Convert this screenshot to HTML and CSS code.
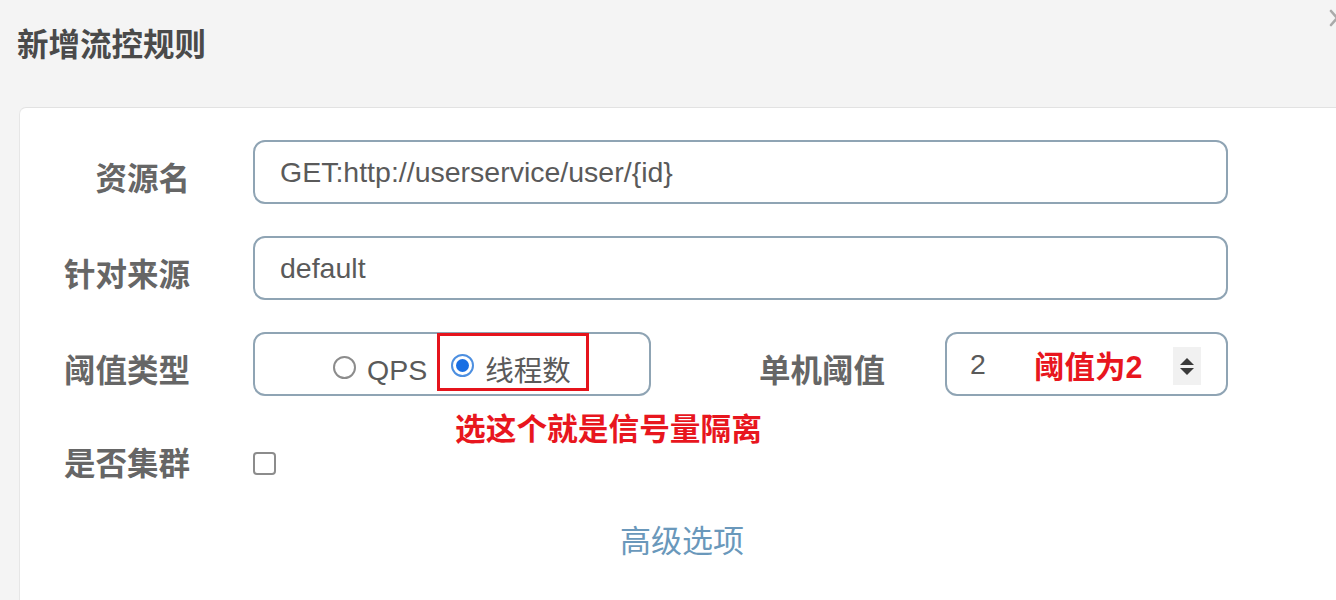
FILE: index.html
```html
<!DOCTYPE html>
<html lang="zh-CN">
<head>
<meta charset="utf-8">
<title>新增流控规则</title>
<link rel="stylesheet" href="styles.css">
</head>
<body>
<div class="modal">
  <div class="modal-header">
    <h3 class="modal-title">新增流控规则</h3>
    <svg class="close" width="16" height="18" viewBox="0 0 16 18" aria-label="close">
      <path d="M2 2 L14 16 M14 2 L2 16" stroke="#aaaaaa" stroke-width="2.6" stroke-linecap="round" fill="none"/>
    </svg>
  </div>
  <div class="card">
    <div class="form-row">
      <label class="label">资源名</label>
      <div class="input wide">GET:http://userservice/user/{id}</div>
    </div>
    <div class="form-row">
      <label class="label">针对来源</label>
      <div class="input wide">default</div>
    </div>
    <div class="form-row rel">
      <label class="label">阈值类型</label>
      <div class="input radio-box">
        <span class="radio"></span>
        <span class="radio-text">QPS</span>
        <span class="mark-box">
          <span class="radio checked"></span>
          <span class="radio-text">线程数</span>
        </span>
      </div>
      <label class="label label2">单机阈值</label>
      <div class="input number">
        <span class="num">2</span>
        <span class="num-note">阈值为2</span>
        <span class="spinner">
          <span class="tri up"></span>
          <span class="tri down"></span>
        </span>
      </div>
      <span class="note">选这个就是信号量隔离</span>
    </div>
    <div class="form-row check-row">
      <label class="label">是否集群</label>
      <span class="checkbox"></span>
    </div>
    <div class="advanced">高级选项</div>
  </div>
</div>
</body>
</html>
```

FILE: styles.css
```css
html, body {
  margin: 0;
  padding: 0;
  height: 100%;
  overflow: hidden;
}
body {
  background: #f4f4f4;
  font-family: "Liberation Sans", "Noto Sans CJK SC", sans-serif;
}
.modal {
  position: relative;
  height: 600px;
}
.modal-header {
  height: 107px;
  box-sizing: border-box;
  padding: 19px 0 0 17px;
}
.modal-title {
  margin: 0;
  font-family: "Noto Sans CJK SC", sans-serif;
  font-size: 31.5px;
  line-height: 46px;
  font-weight: 700;
  color: #4a4a4a;
}
.close {
  position: absolute;
  right: -9px;
  top: 9px;
}
.card {
  margin-left: 19px;
  margin-right: -20px;
  height: 520px;
  background: #ffffff;
  border-top: 1px solid #e2e2e2;
  border-left: 1px solid #e6e6e6;
  border-top-left-radius: 7px;
  padding-top: 32px;
  box-sizing: border-box;
}
.form-row {
  display: flex;
  align-items: center;
  height: 64px;
  margin-bottom: 32px;
}
.form-row.rel {
  position: relative;
  margin-top: 1px;
}
.label {
  width: 170px;
  flex: none;
  text-align: right;
  font-family: "Noto Sans CJK SC", sans-serif;
  font-size: 31.5px;
  font-weight: 700;
  color: #666666;
  padding-top: 8px;
  margin-right: 63px;
}
.label2 {
  width: 234px;
  margin-right: 60px;
}
.input {
  box-sizing: border-box;
  height: 64px;
  border: 2px solid #8fa4b4;
  border-radius: 12px;
  display: flex;
  align-items: center;
  font-size: 28.5px;
  color: #5a5a5a;
  flex: none;
}
.wide {
  width: 975px;
  padding-left: 25px;
}
.radio-box {
  width: 398px;
  padding-left: 78px;
  align-items: flex-start;
}
.radio {
  box-sizing: border-box;
  width: 23px;
  height: 23px;
  border-radius: 50%;
  border: 2px solid #8c8c8c;
  background: #fff;
  margin-top: 22px;
  flex: none;
}
.radio.checked {
  border: 2px solid #4d8fe0;
  position: relative;
  margin-top: 18px;
}
.radio.checked::after {
  content: "";
  position: absolute;
  left: 3px;
  top: 3px;
  width: 13px;
  height: 13px;
  border-radius: 50%;
  background: #1a6fe3;
}
.radio-text {
  margin-left: 11px;
  line-height: 64px;
  margin-top: 4px;
}
.mark-box {
  display: flex;
  align-items: flex-start;
  box-sizing: border-box;
  width: 152px;
  height: 58px;
  border: 3px solid #e5141c;
  margin-left: 10px;
  margin-top: -1px;
  padding-left: 11px;
}
.mark-box .radio-text {
  line-height: 58px;
  margin-top: 6px;
}
.number {
  width: 283px;
  padding-left: 23px;
  position: relative;
}
.num {
  width: 64px;
  margin-top: 0px;
}
.num-note {
  font-family: "Liberation Sans", "Noto Sans CJK SC", sans-serif;
  font-size: 30.5px;
  font-weight: 700;
  color: #e8161e;
  margin-top: 2px;
}
.spinner {
  position: absolute;
  left: 226px;
  top: 13px;
  width: 28px;
  height: 38px;
  background: #f1f1f1;
  display: flex;
  flex-direction: column;
  align-items: center;
  justify-content: center;
  gap: 3px;
}
.tri {
  width: 0;
  height: 0;
  border-left: 7px solid transparent;
  border-right: 7px solid transparent;
}
.tri.up {
  border-bottom: 7px solid #3a3a3a;
}
.tri.down {
  border-top: 7px solid #3a3a3a;
}
.note {
  position: absolute;
  left: 435px;
  top: 73px;
  font-family: "Noto Sans CJK SC", sans-serif;
  font-size: 30.7px;
  font-weight: 700;
  line-height: 44px;
  color: #e8161e;
  white-space: nowrap;
}
.check-row {
  margin-top: 32px;
  margin-bottom: 0;
  height: 66px;
}
.check-row .label {
  padding-top: 0;
}
.checkbox {
  box-sizing: border-box;
  width: 23px;
  height: 23px;
  border: 2px solid #8c8c8c;
  border-radius: 4px;
  background: #fff;
  margin-top: 4px;
}
.advanced {
  padding-left: 600px;
  margin-top: 22px;
  font-family: "Noto Sans CJK SC", sans-serif;
  font-size: 31px;
  line-height: 46px;
  color: #6a98bb;
}
```
